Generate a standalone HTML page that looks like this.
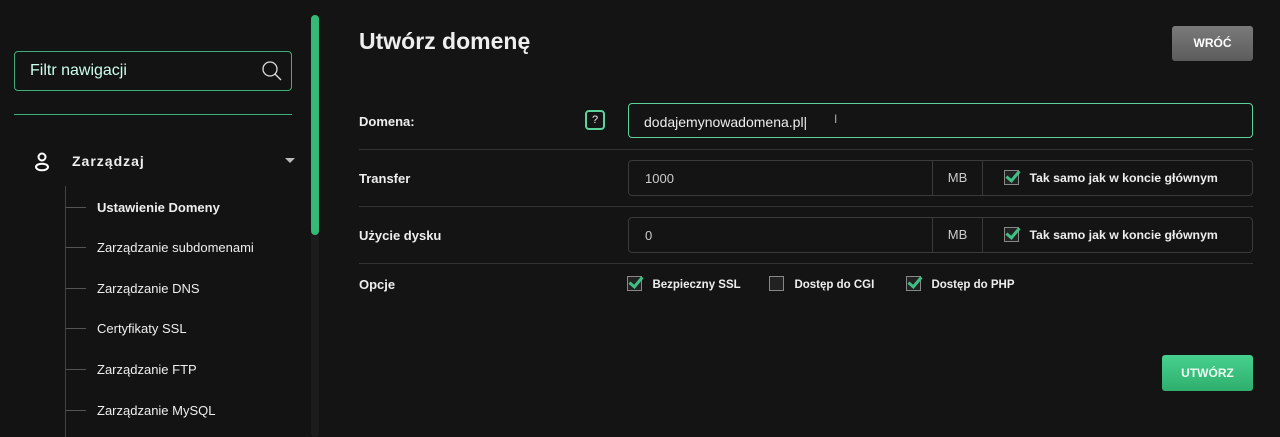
<!DOCTYPE html>
<html><head><meta charset="utf-8"><style>
*{box-sizing:border-box;margin:0;padding:0}
body{width:1280px;height:437px;background:#141414;font-family:"Liberation Sans",sans-serif;color:#eee;position:relative;overflow:hidden}
.a{position:absolute}
.sb{left:0;top:0;width:320px;height:437px;background:#131313}
.filter{left:14px;top:51px;width:278px;height:40px;border:1px solid #3fae7a;border-radius:4px;color:#cfe;font-size:16px;padding:10px 0 0 15px}
.nav{font-size:13px;color:#eee;left:97px}
.tick{left:66px;width:20px;height:1px;background:#555}
.lbl{left:359px;font-size:13px;font-weight:bold;color:#eee}
.sep{left:359px;width:894px;height:1px;background:#333}
.box{border:1px solid #3a3a3a;border-radius:4px;height:36px;font-size:13px;color:#ddd}
.cb{width:15px;height:15px;border:1px solid #888;display:inline-block;position:relative;vertical-align:middle;background:#222}
.cb.on::after{content:"";position:absolute;left:4px;top:-3px;width:5px;height:11px;border:solid #3fbf85;border-width:0 3px 3px 0;transform:rotate(40deg)}
.ct{font-size:12.3px;font-weight:bold;color:#eee}
.ct2{font-size:11.5px;font-weight:bold;color:#eee}
</style></head><body>
<div class="a sb"></div>
<div class="a filter">Filtr nawigacji
<svg class="a" style="right:8px;top:8px" width="22" height="22" viewBox="0 0 22 22"><circle cx="9" cy="9" r="7" fill="none" stroke="#ddd" stroke-width="1.3"/><line x1="14" y1="14" x2="20" y2="20" stroke="#ddd" stroke-width="1.3"/></svg></div>
<div class="a" style="left:14px;top:114px;width:278px;height:1px;background:#3fae7a"></div>
<svg class="a" style="left:33px;top:152px" width="18" height="20" viewBox="0 0 18 20"><circle cx="9" cy="5" r="3.5" fill="none" stroke="#fff" stroke-width="2"/><ellipse cx="9" cy="15" rx="6" ry="3.3" fill="none" stroke="#fff" stroke-width="2"/></svg>
<div class="a" style="left:72px;top:153px;font-size:14px;font-weight:bold;letter-spacing:1px">Zarządzaj</div>
<div class="a" style="left:285px;top:158px;border:5px solid transparent;border-top:5px solid #bbb;border-bottom:0"></div>
<div class="a" style="left:65px;top:186px;width:1px;height:251px;background:#444"></div>
<div class="a tick" style="top:207px"></div><div class="a nav" style="top:200px;font-weight:bold">Ustawienie Domeny</div>
<div class="a tick" style="top:247px"></div><div class="a nav" style="top:240px">Zarządzanie subdomenami</div>
<div class="a tick" style="top:288px"></div><div class="a nav" style="top:281px">Zarządzanie DNS</div>
<div class="a tick" style="top:328px"></div><div class="a nav" style="top:321px">Certyfikaty SSL</div>
<div class="a tick" style="top:369px"></div><div class="a nav" style="top:362px">Zarządzanie FTP</div>
<div class="a tick" style="top:410px"></div><div class="a nav" style="top:403px">Zarządzanie MySQL</div>
<div class="a" style="left:311px;top:15px;width:8px;height:422px;background:#1c1c1c;border-radius:4px"></div>
<div class="a" style="left:311px;top:15px;width:8px;height:220px;background:#34b977;border-radius:4px"></div>

<div class="a" style="left:359px;top:28px;font-size:23px;font-weight:bold;color:#eee">Utwórz domenę</div>
<div class="a" style="left:1172px;top:26px;width:81px;height:35px;background:linear-gradient(#7a7a7a,#5c5c5c);border-radius:3px;font-size:12px;font-weight:bold;color:#fff;text-align:center;line-height:35px">WRÓĆ</div>

<div class="a lbl" style="top:114px">Domena:</div>
<div class="a" style="left:585px;top:110px;width:20px;height:20px;border:2px solid #5fd19d;border-radius:4px;font-size:11px;text-align:center;line-height:16px;color:#eee">?</div>
<div class="a box" style="left:628px;top:103px;width:625px;height:35px;border-color:#5fd19d;padding:10px 15px;font-size:14px;color:#eee">dodajemynowadomena.pl|<span class="a" style="left:205px;top:8px;color:#aaa;font-size:12px">I</span></div>
<div class="a sep" style="top:149px"></div>

<div class="a lbl" style="top:171px">Transfer</div>
<div class="a box" style="left:628px;top:160px;width:625px"></div>
<div class="a" style="left:645px;top:171px;font-size:13px;color:#ccc">1000</div>
<div class="a" style="left:932px;top:161px;width:51px;height:34px;border-left:1px solid #3a3a3a;border-right:1px solid #3a3a3a;font-size:13px;color:#ccc;text-align:center;line-height:34px">MB</div>
<div class="a" style="left:1004px;top:169px"><span class="cb on"></span> <span class="ct" style="margin-left:6px">Tak samo jak w koncie głównym</span></div>
<div class="a sep" style="top:206px"></div>

<div class="a lbl" style="top:228px">Użycie dysku</div>
<div class="a box" style="left:628px;top:217px;width:625px"></div>
<div class="a" style="left:645px;top:228px;font-size:13px;color:#ccc">0</div>
<div class="a" style="left:932px;top:218px;width:51px;height:34px;border-left:1px solid #3a3a3a;border-right:1px solid #3a3a3a;font-size:13px;color:#ccc;text-align:center;line-height:34px">MB</div>
<div class="a" style="left:1004px;top:226px"><span class="cb on"></span> <span class="ct" style="margin-left:6px">Tak samo jak w koncie głównym</span></div>
<div class="a sep" style="top:263px"></div>

<div class="a lbl" style="top:277px;font-weight:bold">Opcje</div>
<div class="a" style="left:627px;top:275px"><span class="cb on"></span> <span class="ct2" style="margin-left:6px">Bezpieczny SSL</span></div>
<div class="a" style="left:769px;top:275px"><span class="cb"></span> <span class="ct2" style="margin-left:6px">Dostęp do CGI</span></div>
<div class="a" style="left:906px;top:275px"><span class="cb on"></span> <span class="ct2" style="margin-left:6px">Dostęp do PHP</span></div>

<div class="a" style="left:1162px;top:355px;width:91px;height:36px;background:linear-gradient(#47d08f,#2fae6c);border-radius:3px;font-size:12px;font-weight:bold;color:#eafff2;text-align:center;line-height:36px">UTWÓRZ</div>
</body></html>
